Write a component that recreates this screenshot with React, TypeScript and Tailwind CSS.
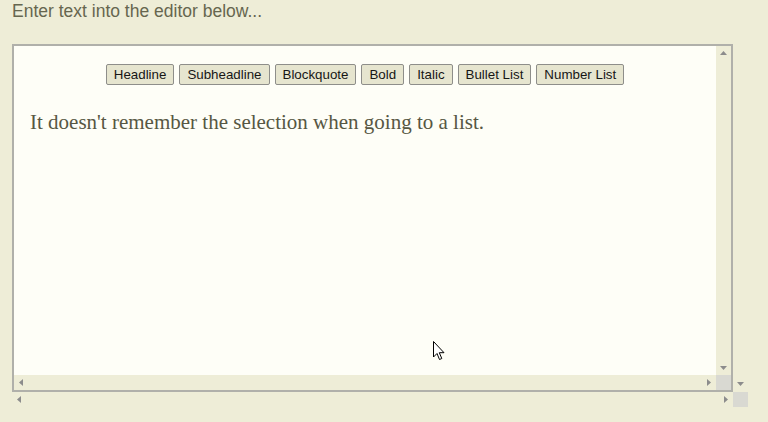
import React from "react";

const Tri = ({ dir }: { dir: "up" | "down" | "left" | "right" }) => {
  const pts: Record<string, string> = {
    up: "0,4 7,4 3.5,0",
    down: "0,0 7,0 3.5,4",
    left: "4,0 4,7 0,3.5",
    right: "0,0 0,7 4,3.5",
  };
  const vert = dir === "up" || dir === "down";
  return (
    <svg width={vert ? 7 : 4} height={vert ? 4 : 7} viewBox={vert ? "0 0 7 4" : "0 0 4 7"}>
      <polygon points={pts[dir]} fill="#8c8c8c" />
    </svg>
  );
};

const Btn = ({ children }: { children: React.ReactNode }) => (
  <button className="h-[21px] px-[7px] border border-[#8e8e8a] rounded-[2px] bg-[#e6e5cf] text-[13.33px] leading-[17px] text-[#161616] font-['Liberation_Sans',Arial,sans-serif]">
    {children}
  </button>
);

export default function App() {
  return (
    <div className="w-[768px] h-[422px] bg-[#eeedd7] overflow-hidden relative font-['Liberation_Sans',Arial,sans-serif]">
      <p className="pl-3 pt-[1px] h-[44px] text-[17.5px] leading-[20px] text-[#66664f]">
        Enter text into the editor below...
      </p>
      <div className="ml-3 w-[736px] flex flex-col">
        <div className="flex">
          <div className="w-[721px] h-[348px] border-2 border-[#b0b0aa] flex flex-col">
            <div className="flex flex-1 min-h-0">
              <div className="flex-1 bg-[#fefef7] flex flex-col">
                <div className="flex justify-center gap-[5px] mt-[18px]">
                  <Btn>Headline</Btn>
                  <Btn>Subheadline</Btn>
                  <Btn>Blockquote</Btn>
                  <Btn>Bold</Btn>
                  <Btn>Italic</Btn>
                  <Btn>Bullet List</Btn>
                  <Btn>Number List</Btn>
                </div>
                <p className="mt-[25px] pl-4 font-['Liberation_Serif','Times_New_Roman',serif] text-[21px] leading-[24px] text-[#575743]">
                  It doesn't remember the selection when going to a list.
                </p>
              </div>
              <div className="w-[15px] flex flex-col justify-between items-center py-[5px]">
                <Tri dir="up" />
                <Tri dir="down" />
              </div>
            </div>
            <div className="flex h-[15px]">
              <div className="flex-1 flex justify-between items-center px-[5px]">
                <Tri dir="left" />
                <Tri dir="right" />
              </div>
              <div className="w-[15px] bg-[#d9d9d2]" />
            </div>
          </div>
          <div className="w-[15px] flex flex-col justify-end items-center pb-[6px]">
            <Tri dir="down" />
          </div>
        </div>
        <div className="flex h-[15px]">
          <div className="flex-1 flex justify-between items-center px-[5px]">
            <Tri dir="left" />
            <Tri dir="right" />
          </div>
          <div className="w-[15px] bg-[#d9d9d2]" />
        </div>
      </div>
      <svg className="absolute left-[433px] top-[341px]" width="13" height="20" viewBox="0 0 13 20">
        <path d="M0.5 0.5 L0.5 16 L4 12.5 L6.5 18.5 L8.8 17.5 L6.3 11.7 L11 11.7 Z" fill="#ffffff" stroke="#000000" strokeWidth="1" strokeLinejoin="miter" />
      </svg>
    </div>
  );
}
